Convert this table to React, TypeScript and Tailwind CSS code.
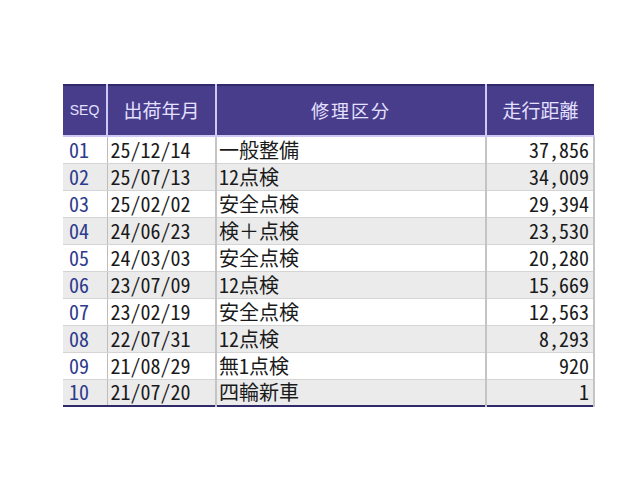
import React from 'react';

interface Row {
  seq: string;
  date: string;
  kind: string;
  km: string;
}

const rows: Row[] = [
  { seq: '01', date: '25/12/14', kind: '一般整備', km: '37,856' },
  { seq: '02', date: '25/07/13', kind: '12点検', km: '34,009' },
  { seq: '03', date: '25/02/02', kind: '安全点検', km: '29,394' },
  { seq: '04', date: '24/06/23', kind: '検＋点検', km: '23,530' },
  { seq: '05', date: '24/03/03', kind: '安全点検', km: '20,280' },
  { seq: '06', date: '23/07/09', kind: '12点検', km: '15,669' },
  { seq: '07', date: '23/02/19', kind: '安全点検', km: '12,563' },
  { seq: '08', date: '22/07/31', kind: '12点検', km: '8,293' },
  { seq: '09', date: '21/08/29', kind: '無1点検', km: '920' },
  { seq: '10', date: '21/07/20', kind: '四輪新車', km: '1' },
];

// full-width plus keeps its full width (hwid would shrink it)
const renderKind = (kind: string) =>
  kind.split(/(＋)/).map((part, i) =>
    part === '＋' ? (
      <span key={i} className="[font-feature-settings:normal]">＋</span>
    ) : (
      part
    )
  );

export default function App() {
  return (
    <div
      className="w-[640px] h-[480px] bg-white pt-[84px] pl-[63px] [font-feature-settings:'hwid']"
      style={{ fontFamily: '"Noto Sans CJK JP", sans-serif' }}
    >
      <table className="w-[531px] border-collapse table-fixed border-b-2 border-b-[#2f2b6b]">
        <colgroup>
          <col className="w-[44px]" />
          <col className="w-[109px]" />
          <col className="w-[270px]" />
          <col className="w-[108px]" />
        </colgroup>
        <thead>
          <tr className="h-[51px] bg-[#483d8b] text-[#e4e0ff] border-t-2 border-t-[#2f2b6b]">
            <th className="font-normal text-[14px] border-r-2 border-r-[#cfc8f5] border-b-2 border-b-[#cfc8f5] [font-feature-settings:normal]" style={{ fontFamily: '"Liberation Sans", sans-serif' }}>SEQ</th>
            <th className="font-normal text-[19px] border-r-2 border-r-[#cfc8f5] border-b-2 border-b-[#cfc8f5]">出荷年月</th>
            <th className="font-normal text-[18px] tracking-[2px] border-r-2 border-r-[#cfc8f5] border-b-2 border-b-[#cfc8f5]">修理区分</th>
            <th className="font-normal text-[19px] border-b-2 border-b-[#cfc8f5]">走行距離</th>
          </tr>
        </thead>
        <tbody>
          {rows.map((r, i) => (
            <tr
              key={r.seq}
              className={`h-[27px] text-[20px] leading-none ${i % 2 === 1 ? 'bg-[#ebebeb]' : 'bg-white'}`}
            >
              <td className="pl-[6px] text-[#2e3a8c] border-b border-b-[#d4d4d4] border-r border-r-[#bdbdbd]">{r.seq}</td>
              <td className="pl-[3px] text-[#1a1a1a] border-b border-b-[#d4d4d4] border-r-2 border-r-[#c4c4c4]">{r.date}</td>
              <td className="pl-[2px] text-[#1a1a1a] border-b border-b-[#d4d4d4] border-r-2 border-r-[#c4c4c4]">{renderKind(r.kind)}</td>
              <td className="pr-[4px] text-right text-[#1a1a1a] border-b border-b-[#d4d4d4] border-r-2 border-r-[#c4c4c4]">{r.km}</td>
            </tr>
          ))}
        </tbody>
      </table>
    </div>
  );
}
